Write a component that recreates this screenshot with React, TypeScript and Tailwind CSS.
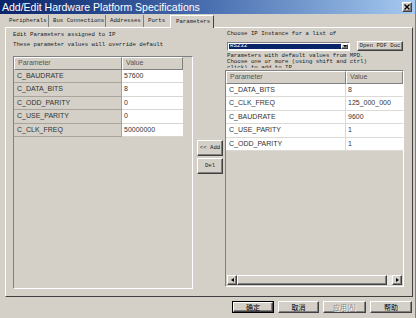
import React from 'react';

const leftRows = [
  ['C_BAUDRATE', '57600'],
  ['C_DATA_BITS', '8'],
  ['C_ODD_PARITY', '0'],
  ['C_USE_PARITY', '0'],
  ['C_CLK_FREQ', '50000000'],
];

const rightRows = [
  ['C_DATA_BITS', '8'],
  ['C_CLK_FREQ', '125_000_000'],
  ['C_BAUDRATE', '9600'],
  ['C_USE_PARITY', '1'],
  ['C_ODD_PARITY', '1'],
];

const mono = "font-['Liberation_Mono',monospace] text-[5.7px] text-[#1a1a1a]";
const sans = "font-['Liberation_Sans',Arial,sans-serif]";
const raised =
  'border border-t-white border-l-white border-r-[#404040] border-b-[#404040] shadow-[inset_-1px_-1px_0_#808080] bg-[#d4d0c8]';
const sunken = 'border border-t-[#808080] border-l-[#808080] border-r-white border-b-white';

function Tab({ label, w, sep = true }: { label: string; w: string; sep?: boolean }) {
  return (
    <div className={`${w} h-[12px] mt-[1px] flex items-center pl-[4px] ${sep ? 'border-r border-[#808080]' : ''}`}>
      <span className={`${mono} leading-none whitespace-nowrap`}>{label}</span>
    </div>
  );
}

function HeaderCell({ label, w }: { label: string; w: string }) {
  return (
    <div
      className={`${w} h-full flex items-center pl-[3px] border-r border-b border-r-[#808080] border-b-[#808080] border-t border-l border-t-white border-l-white ${sans} text-[7px] text-[#555]`}
    >
      {label}
    </div>
  );
}

export default function App() {
  return (
    <div className="w-[416px] h-[318px] bg-[#d4d0c8] overflow-hidden flex flex-col border-r border-[#808080]">
      {/* title bar */}
      <div className="h-[14px] shrink-0 flex items-center bg-gradient-to-r from-[#0a246a] via-[#4a6fb0] to-[#a6caf0] pl-[2px] pr-[3px]">
        <span className={`${sans} text-[10.5px] leading-none text-white flex-1 whitespace-nowrap`}>
          Add/Edit Hardware Platform Specifications
        </span>
        <div className={`${raised} w-[10px] h-[10px] flex items-center justify-center`}>
          <svg width="6" height="6" viewBox="0 0 6 6">
            <path d="M0.5 0.5 L5.5 5.5 M5.5 0.5 L0.5 5.5" stroke="#000" strokeWidth="1.4" />
          </svg>
        </div>
      </div>

      {/* tabs */}
      <div className="h-[13px] shrink-0 flex items-end ml-[5px]">
        <Tab label="Peripherals" w="w-[44px]" />
        <Tab label="Bus Connections" w="w-[57px]" />
        <Tab label="Addresses" w="w-[38px]" />
        <Tab label="Ports" w="w-[26px]" sep={false} />
        <div className="w-[44px] h-[13px] flex items-center pl-[5px] border-l border-t border-l-white border-t-white border-r border-r-[#404040] bg-[#d4d0c8] relative top-[1px]">
          <span className={`${mono} leading-none whitespace-nowrap`}>Parameters</span>
        </div>
      </div>

      {/* panel */}
      <div className="ml-[5px] w-[408px] h-[270px] shrink-0 border border-t-white border-l-white border-r-[#404040] border-b-[#404040] flex pl-[7px] pt-[2px]">
        {/* left column */}
        <div className="w-[180px] flex flex-col">
          <div className={`${mono} leading-[10px] whitespace-nowrap`}>
            <div>Edit Parameters assigned to IP</div>
            <div>These parameter values will override default</div>
          </div>
          <div className={`mt-[6px] h-[233px] ${sunken} bg-[#d4d0c8] flex flex-col`}>
            <div className="h-[13px] flex">
              <HeaderCell label="Parameter" w="w-[108px]" />
              <HeaderCell label="Value" w="w-[61px]" />
            </div>
            {leftRows.map(([p, v]) => (
              <div key={p} className={`h-[13.4px] flex ${sans} text-[7px] text-[#333]`}>
                <div className="w-[108px] bg-[#d4d0c8] border-b border-r border-b-[#a8a49c] border-r-[#a8a49c] flex items-center pl-[3px]">
                  {p}
                </div>
                <div className="w-[61px] bg-white border-b border-[#d8d6d0] flex items-center pl-[2px]">{v}</div>
              </div>
            ))}
          </div>
        </div>

        {/* middle buttons */}
        <div className="w-[32px] pl-[4px] flex flex-col">
          <div className={`mt-[110px] w-[26px] h-[16px] ${raised} flex items-center justify-center ${mono}`}>
            &lt;&lt; Add
          </div>
          <div className={`mt-[2px] w-[26px] h-[16px] ${raised} flex items-center justify-center ${mono}`}>
            Del
          </div>
        </div>

        {/* right column */}
        <div className="w-[179px] flex flex-col">
          <div className={`${mono} leading-[8px] pl-[2px] whitespace-nowrap`}>Choose IP Instance for a list of</div>
          <div className="mt-[3px] flex items-center pl-[2px]">
            <div className={`w-[123px] h-[9px] ${sunken} bg-white flex items-center p-[1px]`}>
              <div className={`flex-1 h-full bg-[#0a246a] flex items-center pl-[1px] ${mono} text-white`}>RS232</div>
              <div className={`w-[7px] h-full ${raised} border-[0.5px] flex items-center justify-center`}>
                <svg width="4" height="3" viewBox="0 0 4 3">
                  <path d="M0 0 H4 L2 2.5 Z" fill="#000" />
                </svg>
              </div>
            </div>
            <div className={`ml-[7px] w-[46px] h-[10px] ${raised} flex items-center justify-center ${mono} whitespace-nowrap`}>
              Open PDF Doc
            </div>
          </div>
          <div className={`mt-[2px] mb-[2px] h-[15px] overflow-hidden ${mono} leading-[6px] pl-[2px] whitespace-nowrap`}>
            <div>Parameters with default values from MPD.</div>
            <div>Choose one or more (using shift and ctrl)</div>
            <div>click) to add to IP</div>
          </div>
          <div className={`h-[217px] ${sunken} bg-[#d4d0c8] flex flex-col`}>
            <div className="h-[13px] flex">
              <HeaderCell label="Parameter" w="w-[120px]" />
              <HeaderCell label="Value" w="w-[57px]" />
            </div>
            {rightRows.map(([p, v]) => (
              <div key={p} className={`h-[13.4px] flex bg-white ${sans} text-[7px] text-[#333]`}>
                <div className="w-[120px] border-b border-r border-[#dcdad4] flex items-center pl-[3px]">{p}</div>
                <div className="w-[57px] border-b border-[#dcdad4] flex items-center pl-[2px]">{v}</div>
              </div>
            ))}
            {/* horizontal scrollbar */}
            <div className="mt-auto mb-[1px] mx-[1px] h-[10px] flex bg-[#e8e6e2]">
              <div className={`w-[10px] h-full ${raised} flex items-center justify-center`}>
                <svg width="3" height="4" viewBox="0 0 3 4">
                  <path d="M3 0 V4 L0 2 Z" fill="#000" />
                </svg>
              </div>
              <div className={`w-[150px] h-full ${raised}`} />
              <div className="flex-1" />
              <div className={`w-[10px] h-full ${raised} flex items-center justify-center`}>
                <svg width="3" height="4" viewBox="0 0 3 4">
                  <path d="M0 0 V4 L3 2 Z" fill="#000" />
                </svg>
              </div>
            </div>
          </div>
        </div>
      </div>

      {/* dialog buttons */}
      <div className="flex gap-[4px] pl-[232px] pt-[4px] font-['Noto_Sans_CJK_SC',sans-serif] text-[7px] leading-none">
        <div className="w-[42px] h-[12px] border border-black">
          <div className={`w-full h-full ${raised} flex items-center justify-center text-black`}>确定</div>
        </div>
        <div className={`w-[41px] h-[12px] ${raised} flex items-center justify-center text-black`}>取消</div>
        <div className={`w-[43px] h-[12px] ${raised} flex items-center justify-center text-[#8a8882] [text-shadow:1px_1px_0_#fff]`}>
          应用(A)
        </div>
        <div className={`w-[42px] h-[12px] ${raised} flex items-center justify-center text-black`}>帮助</div>
      </div>
    </div>
  );
}
